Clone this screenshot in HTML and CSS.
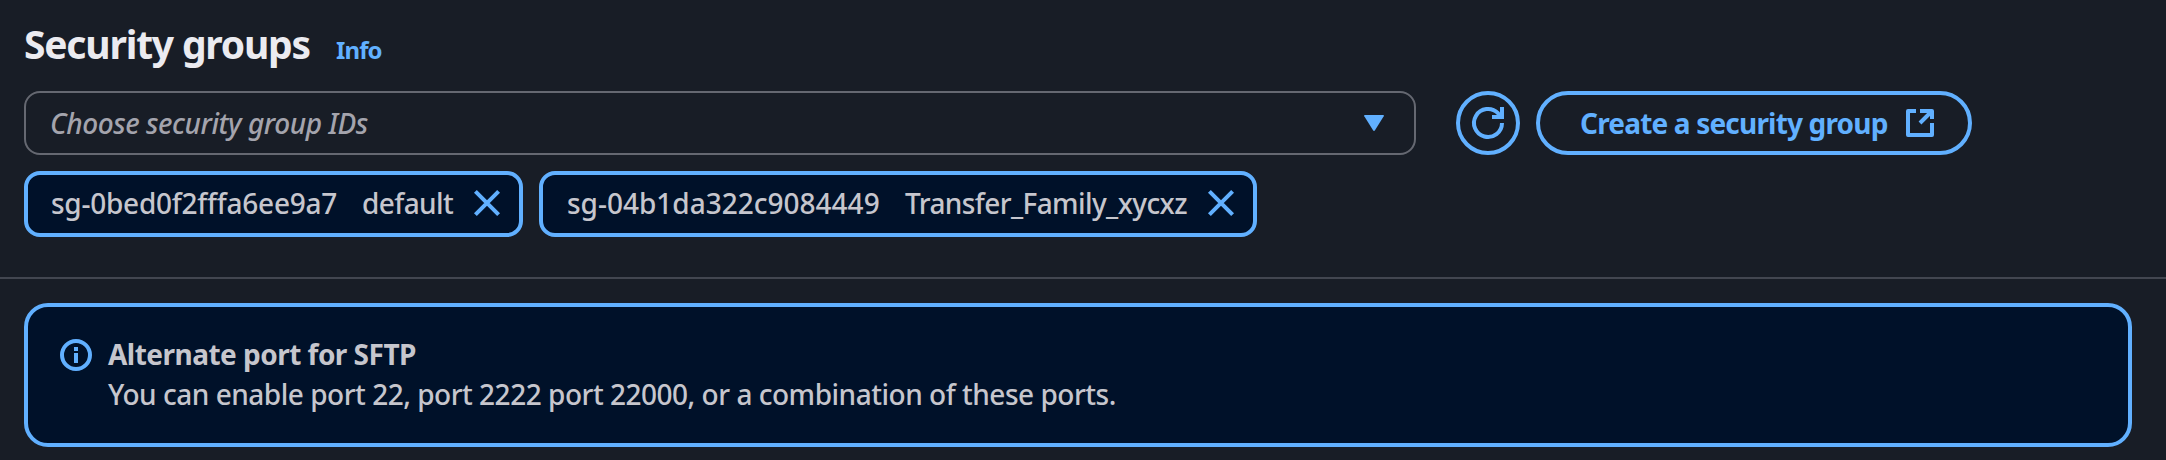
FILE: index.html
```html
<!DOCTYPE html>
<html lang="en">
<head>
<meta charset="utf-8">
<title>Security groups</title>
<link rel="stylesheet" href="styles.css">
</head>
<body>
<section class="groups">
  <header class="heading">
    <h2 class="title">Security groups</h2>
    <a class="info">Info</a>
  </header>
  <div class="controls">
    <div class="select">
      <span class="placeholder">Choose security group IDs</span>
      <svg class="caret" viewBox="0 0 20 16"><path d="M1 0h18q1.500 0 .7 1.300L11 15.300q-1 1.400-2 0L.3 1.300Q-.5 0 1 0z" fill="currentColor"/></svg>
    </div>
    <button class="refresh" aria-label="Refresh">
      <svg viewBox="0 0 32 32" fill="none" stroke="currentColor" stroke-width="4"><path d="M30 16a14 14 0 1 1-4-9.800L29 10"/><path d="M30 0v10H20"/></svg>
    </button>
    <button class="create">
      <span class="create-text">Create a security group</span>
      <svg class="external" viewBox="0 0 28 28" fill="none" stroke="currentColor" stroke-width="4" stroke-linejoin="round"><path d="M10 2H2v24h24V14M14 2h12v8M26 2L14 14"/></svg>
    </button>
  </div>
  <div class="tokens">
    <div class="token token-default">
      <span class="token-id id-a">sg-0bed0f2fffa6ee9a7</span><span class="name-a">default</span>
      <svg class="close" viewBox="0 0 26 26" stroke="currentColor" stroke-width="4"><path d="M1.400 1.400l23.200 23.200M24.600 1.400L1.400 24.600"/></svg>
    </div>
    <div class="token token-transfer">
      <span class="token-id id-b">sg-04b1da322c9084449</span><span class="name-b">Transfer_Family_xycxz</span>
      <svg class="close" viewBox="0 0 26 26" stroke="currentColor" stroke-width="4"><path d="M1.400 1.400l23.200 23.200M24.600 1.400L1.400 24.600"/></svg>
    </div>
  </div>
</section>
<hr class="divider">
<aside class="alert">
  <svg class="alert-icon" viewBox="0 0 32 32"><circle cx="16" cy="16" r="14" fill="none" stroke="currentColor" stroke-width="4"/><path d="M14 8h4v4h-4zM14 14h4v10h-4z" fill="currentColor"/></svg>
  <div class="alert-copy">
    <strong class="alert-title">Alternate port for SFTP</strong>
    <p class="alert-text">You can enable port 22, port 2222 port 22000, or a combination of these ports.</p>
  </div>
</aside>
</body>
</html>
```

FILE: styles.css
```css
* { box-sizing: border-box; }
body {
  margin: 0;
  height: 460px;
  overflow: hidden;
  background: #181d26;
  color: #c6c6cd;
  font: 500 28px/40px "Noto Sans", sans-serif;
  white-space: nowrap;
}
svg { display: block; flex: none; overflow: visible; }
.groups { padding: 20px 24px 0; }
.heading { display: flex; align-items: baseline; height: 71px; }
.title { margin: 0; width: 312px; font-size: 39px; line-height: 47px; font-weight: 700; color: #ebebf0; letter-spacing: -1.2px; }
.info { font-size: 24px; font-weight: 700; color: #61b0ff; letter-spacing: -.9px; }
.controls { display: flex; }
.select {
  display: flex; align-items: center; justify-content: space-between;
  width: 1392px; height: 64px; padding: 0 30px 0 24px;
  border: 2px solid #656871; border-radius: 16px;
}
.placeholder { color: #a4a4ad; font-style: italic; letter-spacing: -.44px; }
.caret { width: 20px; height: 16px; color: #61b0ff; }
.refresh, .create {
  display: flex; align-items: center; height: 64px; padding: 0;
  border: 4px solid #61b0ff; border-radius: 32px; background: none; color: #61b0ff;
  font: 700 28px/40px "Noto Sans", sans-serif;
}
.refresh { width: 64px; justify-content: center; margin: 0 16px 0 40px; }
.refresh svg { width: 32px; height: 32px; }
.create { width: 436px; padding-left: 40px; }
.create-text { width: 326px; text-align: left; letter-spacing: -.82px; }
.external { width: 28px; height: 28px; }
.tokens { display: flex; gap: 16px; margin-top: 16px; }
.token {
  display: flex; align-items: center; height: 66px; padding: 0 19px 3px 23px;
  border: 4px solid #61b0ff; border-radius: 16px; background: #001129;
}
.token-default { width: 499px; }
.token-transfer { width: 718px; padding-left: 24px; }
.token-id { width: 311px; letter-spacing: -.25px; }
.id-b { width: 338px; letter-spacing: 0; }
.name-a { letter-spacing: -.6px; }
.name-b { letter-spacing: -.6px; }
.close { width: 26px; height: 26px; margin-left: auto; color: #61b0ff; }
.divider { height: 2px; margin: 40px 0 24px; border: 0; background: #424650; }
.alert {
  display: flex; width: 2108px; height: 144px; margin-left: 24px; padding: 32px;
  border: 4px solid #61b0ff; border-radius: 24px; background: #001129;
}
.alert-icon { width: 32px; height: 32px; margin-right: 16px; color: #61b0ff; }
.alert-copy { margin-top: -5px; }
.alert-title { display: block; font-weight: 700; letter-spacing: -.52px; }
.alert-text { margin: 0; letter-spacing: -.48px; }
```
